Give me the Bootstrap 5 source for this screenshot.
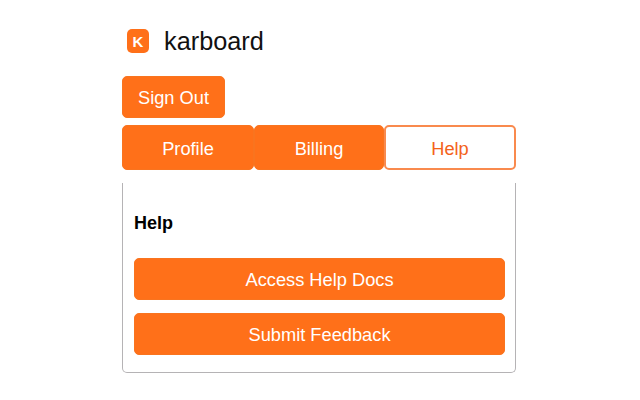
<!DOCTYPE html>
<html lang="en">
<head>
<meta charset="utf-8">
<title>karboard</title>
<link href="https://cdn.jsdelivr.net/npm/bootstrap@5.3.0/dist/css/bootstrap.min.css" rel="stylesheet">
<style>
body { font-family: "Liberation Sans", Arial, sans-serif; background: #fff; color: #000; }
.kb-wrap { width: 394px; margin-left: 122px; padding-top: 29px; }
.kb-brand { padding-left: 5px; height: 24px; margin-bottom: 23px; gap: 15px; }
.kb-logo { width: 22px; height: 24px; background: #ff7019; border-radius: 5px; color: #fff; font-size: 15px; font-weight: 700; line-height: 1; }
.kb-name { font-size: 25.3px; line-height: 1; color: #111; padding-top: 1px; }
.kb-btn { background: #ff7019; border: 1px solid #f9741f; color: #fff; font-size: 18.25px; line-height: 1.2; border-radius: 5px; padding: 2px 0 0; transition: none; }
.kb-btn:hover, .kb-btn:focus { background: #ff7019; color: #fff; border-color: #f9741f; }
.kb-signout { width: 103px; height: 42px; margin-bottom: 7px; }
.kb-tabs { height: 45px; margin-bottom: 13px; }
.kb-tab { flex: 0 0 auto; height: 45px; }
.kb-tab-a { width: 132px; }
.kb-tab-b { width: 130px; }
.kb-tab-c { width: 132px; background: #fff; color: #f4621a; border: 2px solid #f98a4e; }
.kb-tab-c:hover, .kb-tab-c:focus { background: #fff; color: #f4621a; border-color: #f98a4e; }
.kb-panel { height: 190px; border: 1px solid #b5b3b5; border-top: 0; border-radius: 0 0 5px 5px; padding: 30px 11px 0; }
.kb-title { font-size: 18px; font-weight: 700; line-height: 20px; margin: 0 0 25px; color: #000; }
.kb-wide { height: 42px; width: 371px; }
.kb-stack { gap: 13px; }
</style>
</head>
<body>
<div class="kb-wrap">
  <div class="kb-brand d-flex align-items-center">
    <span class="kb-logo d-flex align-items-center justify-content-center">K</span>
    <span class="kb-name">karboard</span>
  </div>
  <button type="button" class="btn kb-btn kb-signout d-block">Sign Out</button>
  <div class="kb-tabs d-flex">
    <button type="button" class="btn kb-btn kb-tab kb-tab-a">Profile</button>
    <button type="button" class="btn kb-btn kb-tab kb-tab-b">Billing</button>
    <button type="button" class="btn kb-btn kb-tab kb-tab-c">Help</button>
  </div>
  <div class="kb-panel">
    <h2 class="kb-title">Help</h2>
    <div class="kb-stack d-flex flex-column">
      <button type="button" class="btn kb-btn kb-wide">Access Help Docs</button>
      <button type="button" class="btn kb-btn kb-wide">Submit Feedback</button>
    </div>
  </div>
</div>
<script src="https://cdn.jsdelivr.net/npm/bootstrap@5.3.0/dist/js/bootstrap.bundle.min.js"></script>
</body>
</html>
